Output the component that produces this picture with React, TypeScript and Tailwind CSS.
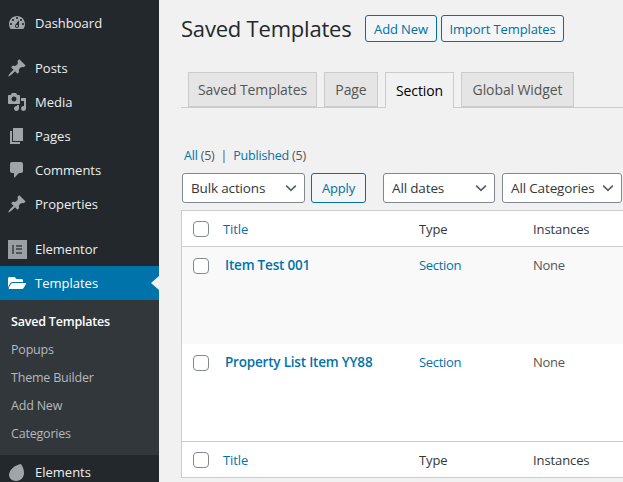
import React from 'react';
import { FaFolderOpen } from 'react-icons/fa';

const PATHS: Record<string, string> = {
  dashboard:
    'M3.76 16h12.48c1.1-1.37 1.76-3.11 1.76-5 0-4.42-3.58-8-8-8s-8 3.58-8 8c0 1.89.66 3.63 1.76 5zM10 4c.55 0 1 .45 1 1s-.45 1-1 1-1-.45-1-1 .45-1 1-1zM6 6c.55 0 1 .45 1 1s-.45 1-1 1-1-.45-1-1 .45-1 1-1zm8 0c.55 0 1 .45 1 1s-.45 1-1 1-1-.45-1-1 .45-1 1-1zm-5.37 5.55L12 7v6c0 1.1-.9 2-2 2s-2-.9-2-2c0-.57.24-1.08.63-1.45zM4 10c.55 0 1 .45 1 1s-.45 1-1 1-1-.45-1-1 .45-1 1-1zm12 0c.55 0 1 .45 1 1s-.45 1-1 1-1-.45-1-1 .45-1 1-1zm-5 3c0-.55-.45-1-1-1s-1 .45-1 1 .45 1 1 1 1-.45 1-1z',
  pin: 'M10.44 3.02l1.82-1.82 6.36 6.35-1.83 1.82c-1.05-.68-2.48-.57-3.41.36l-.75.75c-.92.93-1.04 2.35-.35 3.41l-1.83 1.82-2.41-2.41-2.8 2.79c-.42.42-3.38 2.71-3.8 2.29s1.86-3.39 2.28-3.81l2.79-2.79L4.1 9.36l1.83-1.82c1.05.69 2.48.57 3.41-.36l.75-.75c.93-.92 1.04-2.35.35-3.41z',
  media:
    'M13 11V4c0-.55-.45-1-1-1h-1.67L9 1H5L3.67 3H2c-.55 0-1 .45-1 1v7c0 .55.45 1 1 1h10c.55 0 1-.45 1-1zM7 4.5c1.38 0 2.5 1.12 2.5 2.5S8.38 9.5 7 9.5 4.5 8.38 4.5 7 5.62 4.5 7 4.5zM14 6h5v10.5c0 1.38-1.12 2.5-2.5 2.5S14 17.88 14 16.5s1.12-2.5 2.5-2.5c.17 0 .34.02.5.05V9h-3V6zm-4 8.05V13h2v3.5c0 1.38-1.12 2.5-2.5 2.5S7 17.88 7 16.5 8.12 14 9.5 14c.17 0 .34.02.5.05z',
  pages: 'M6 15V2h10v13H6zm-1 1h8v2H3V5h2v11z',
  comments: 'M5 2h9c1.1 0 2 .9 2 2v7c0 1.1-.9 2-2 2h-2l-5 5v-5H5c-1.1 0-2-.9-2-2V4c0-1.1.9-2 2-2z',
  leaf: 'M14 2C16 5 17 8 17 11C17 16 13 19 9 19C5 19 2 16 2 13C2 8 8 3 14 2z',
};

function Dashicon({ name }: { name: string }) {
  return (
    <svg viewBox="0 0 20 20" className="w-5 h-5 fill-[#a0a5aa]">
      <path d={PATHS[name]} />
    </svg>
  );
}

function ElementorIcon() {
  return (
    <div className="w-[19px] h-[19px] bg-[#9a9fa4] flex items-center justify-center gap-[2px]">
      <div className="w-[2px] h-[9px] bg-[#50565b]" />
      <div className="flex flex-col gap-[1.5px]">
        <div className="w-[6px] h-[2px] bg-[#50565b]" />
        <div className="w-[6px] h-[2px] bg-[#50565b]" />
        <div className="w-[6px] h-[2px] bg-[#50565b]" />
      </div>
    </div>
  );
}

function MenuItem({ icon, label }: { icon: React.ReactNode; label: string }) {
  return (
    <div className="h-[34px] flex items-center pl-[7px] text-[#eeeeee] text-[13px] tracking-normal">
      <div className="w-5 h-5 flex items-center justify-center">{icon}</div>
      <span className="ml-[8px]">{label}</span>
    </div>
  );
}

const SUBMENU = ['Popups', 'Theme Builder', 'Add New', 'Categories'];

function Sidebar() {
  return (
    <div className="w-[159px] shrink-0 bg-[#23282d] pt-[6px]">
      <MenuItem icon={<Dashicon name="dashboard" />} label="Dashboard" />
      <div className="mt-[11px]">
        <MenuItem icon={<Dashicon name="pin" />} label="Posts" />
        <MenuItem icon={<Dashicon name="media" />} label="Media" />
        <MenuItem icon={<Dashicon name="pages" />} label="Pages" />
        <MenuItem icon={<Dashicon name="comments" />} label="Comments" />
        <MenuItem icon={<Dashicon name="pin" />} label="Properties" />
      </div>
      <div className="mt-[11px]">
        <MenuItem icon={<ElementorIcon />} label="Elementor" />
      </div>
      <div className="relative h-[34px] flex items-center pl-[7px] bg-[#0073aa] text-white text-[13px] tracking-normal">
        <div className="w-5 h-5 flex items-center justify-center">
          <FaFolderOpen className="w-[18px] h-[18px]" />
        </div>
        <span className="ml-[8px]">Templates</span>
        <div className="absolute right-0 top-[10px] border-y-[7px] border-y-transparent border-r-[8px] border-r-[#f1f1f1]" />
      </div>
      <div className="bg-[#32373c] pt-[7px] pb-[8px] pl-[11px] text-[#b4b9be]">
        <div className="h-[28px] pt-px flex items-center text-white font-semibold">Saved Templates</div>
        {SUBMENU.map(item => (
          <div key={item} className="h-[28px] pt-px flex items-center">{item}</div>
        ))}
      </div>
      <MenuItem icon={<Dashicon name="leaf" />} label="Elements" />
    </div>
  );
}

function Checkbox() {
  return <div className="w-4 h-4 rounded-[4px] border border-[#7e8993] bg-white" />;
}

function Select({ label, width }: { label: string; width: string }) {
  return (
    <div className={`${width} h-[30px] pl-[8px] pr-[5px] flex items-center justify-between bg-white border border-[#7e8993] rounded-[3px] text-[#32373c] text-[13.5px] tracking-[-0.15px]`}>
      <span className="whitespace-nowrap">{label}</span>
      <svg viewBox="0 0 20 20" className="w-4 h-4 shrink-0 fill-none stroke-[#555d66] stroke-[2]">
        <path d="M4 7l6 6 6-6" />
      </svg>
    </div>
  );
}

function PageButton({ label, width }: { label: string; width: string }) {
  return (
    <div className={`${width} h-[27px] flex items-center justify-center border border-[#0071a1] rounded-[3px] bg-[#f3f5f6] text-[#0071a1] text-[13px] tracking-[-0.1px]`}>
      {label}
    </div>
  );
}

function Tab({ label, width, active }: { label: string; width: string; active?: boolean }) {
  return active ? (
    <div className={`${width} h-[36px] flex items-center justify-center border border-[#cccccc] border-b-0 bg-[#f1f1f1] text-black text-[14px] tracking-[-0.1px] font-medium -mb-px`}>
      {label}
    </div>
  ) : (
    <div className={`${width} h-[35px] flex items-center justify-center border border-[#cccccc] bg-[#e5e5e5] text-[#555555] text-[14px] tracking-[-0.1px] font-medium`}>
      {label}
    </div>
  );
}

function HeaderRow({ border }: { border: string }) {
  return (
    <div className={`h-[36px] grid grid-cols-[41px_196px_114px_1fr] items-center text-[#32373c] text-[13px] tracking-[-0.1px] ${border}`}>
      <div className="pl-[11px]"><Checkbox /></div>
      <div className="text-[#0073aa]">Title</div>
      <div>Type</div>
      <div>Instances</div>
    </div>
  );
}

function Row({ title, bg }: { title: string; bg: string }) {
  return (
    <div className={`h-[97px] grid grid-cols-[41px_196px_114px_1fr] items-start pt-[9px] text-[13px] tracking-[-0.3px] ${bg}`}>
      <div className="pl-[11px] pt-[2px]"><Checkbox /></div>
      <div className="pl-[2px] text-[13.5px] tracking-[-0.2px] font-semibold text-[#0073aa]">{title}</div>
      <div className="text-[#0073aa]">Section</div>
      <div className="text-[#555555]">None</div>
    </div>
  );
}

export default function App() {
  return (
    <div className="w-[623px] h-[482px] overflow-hidden flex bg-[#f1f1f1] font-['Open_Sans',sans-serif] text-[12.5px] tracking-[-0.2px] leading-[18px]">
      <Sidebar />
      <div className="flex-1 min-w-0 pl-[22px]">
        <div className="h-[57px] pt-[15px] flex items-start">
          <div className="w-[171px] h-[26px] flex items-center whitespace-nowrap text-[22px] text-[#23282d]">Saved Templates</div>
          <div className="ml-[13px] flex gap-[4px]">
            <PageButton label="Add New" width="w-[72px]" />
            <PageButton label="Import Templates" width="w-[123px]" />
          </div>
        </div>
        <div className="h-[51px] pl-[7px] flex items-end gap-[7px] border-b border-[#cccccc] w-[464px]">
          <Tab label="Saved Templates" width="w-[129px]" />
          <Tab label="Page" width="w-[54px]" />
          <Tab label="Section" width="w-[69px]" active />
          <Tab label="Global Widget" width="w-[113px]" />
        </div>
        <div className="mt-[39px] pl-[3px] h-[18px] text-[#555555] flex items-center gap-[4px]">
          <span><span className="text-[#0073aa]">All</span> (5)</span>
          <span className="mx-[2px]">|</span>
          <span><span className="text-[#0073aa]">Published</span> (5)</span>
        </div>
        <div className="mt-[8px] pl-[1px] flex">
          <Select label="Bulk actions" width="w-[123px]" />
          <div className="ml-[6px] w-[55px] h-[30px] flex items-center justify-center border border-[#0071a1] rounded-[3px] bg-[#f3f5f6] text-[#0071a1] text-[13px]">Apply</div>
          <div className="ml-[17px]"><Select label="All dates" width="w-[112px]" /></div>
          <div className="ml-[7px]"><Select label="All Categories" width="w-[120px]" /></div>
        </div>
        <div className="mt-[7px] w-[470px] border border-[#cccccc] bg-white">
          <HeaderRow border="border-b border-[#cccccc]" />
          <Row title="Item Test 001" bg="bg-[#f9f9f9]" />
          <Row title="Property List Item YY88" bg="bg-white" />
          <HeaderRow border="border-t border-[#cccccc]" />
        </div>
      </div>
    </div>
  );
}
